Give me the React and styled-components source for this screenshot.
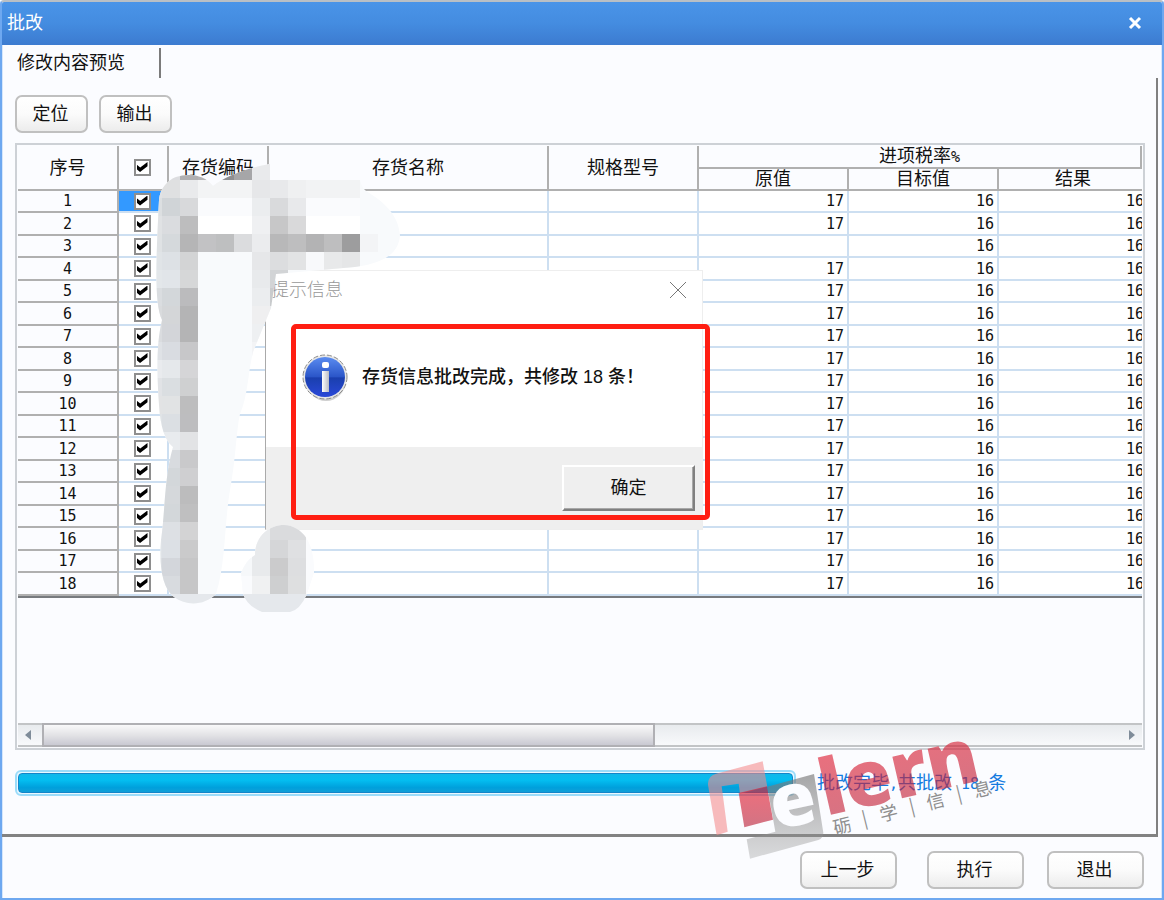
import { useState } from 'react';
import styled, { createGlobalStyle } from 'styled-components';

const GlobalStyle = createGlobalStyle`
  * {
    box-sizing: border-box;
  }
  body {
    margin: 0;
    background: #fbfcff;
    color: #111;
    font-family: 'Liberation Sans', 'Noto Sans CJK SC', sans-serif;
    font-size: 18px;
    line-height: 20px;
  }
  button {
    font: inherit;
    color: inherit;
    cursor: pointer;
  }
`;

const Window = styled.div`
  position: relative;
  display: flex;
  flex-direction: column;
  min-height: 100vh;
  border: 2px solid #6ea8f0;
  border-top-color: #b9bfc5;
  border-radius: 4px 4px 0 0;
  box-shadow: inset 1px 0 0 #d5e6fb, inset -1px 0 0 #d5e6fb;
  overflow: hidden;
`;
const TitleBar = styled.header`
  display: flex;
  justify-content: space-between;
  align-items: center;
  height: 43px;
  padding: 0 20px 2px 5px;
  background: linear-gradient(#4a94e8, #448ce0 50%, #3c7bd0);
  color: #fff;
`;
const Title = styled.h1`
  margin: 0;
  font-size: 18px;
  font-weight: 400;
`;
const IconButton = styled.button`
  display: flex;
  padding: 0;
  border: none;
  background: none;
`;
const TabBar = styled.nav`
  display: flex;
  height: 33px;
  padding: 3px 0 0 15px;
`;
const Tab = styled.button`
  width: 144px;
  height: 30px;
  padding: 0;
  border: none;
  border-right: 2px solid #7b7b7b;
  background: none;
  text-align: left;
`;
const Panel = styled.main`
  flex: 1;
  display: flex;
  flex-direction: column;
  margin-right: 4px;
  padding: 17px 11px 38px 13px;
  border-right: 2px solid #808080;
  border-bottom: 3px solid #828282;
`;
const Toolbar = styled.div`
  display: flex;
  gap: 11px;
  margin-bottom: 10px;
`;
const Button = styled.button`
  width: ${({ $wide }) => ($wide ? '97px' : '73px')};
  height: 38px;
  padding: 0 2px 0 0;
  border: 2px solid #c0c0c0;
  border-radius: 7px;
  background: linear-gradient(#fff, #fbfbfb 50%, #ececec);
`;
const GridFrame = styled.section`
  flex: 1;
  display: flex;
  flex-direction: column;
  justify-content: space-between;
  padding: 1px;
  border: 2px solid #cdd1d6;
`;
const GridView = styled.div`
  overflow: hidden;
`;
const Table = styled.table`
  width: calc(100% + 7px);
  table-layout: fixed;
  border-collapse: separate;
  border-spacing: 0;
  border-bottom: 2px solid #777a7e;
`;
const Col = styled.col`
  width: ${({ $width }) => $width};
`;
const HeadCell = styled.th`
  height: ${({ $half }) => ($half ? '22px' : '45px')};
  padding: 0;
  border-right: 2px solid #b0b0b0;
  border-bottom: 2px solid #b0b0b0;
  font-weight: 400;
  line-height: 20px;
`;
const GroupHead = styled(HeadCell)`
  height: 23px;
  padding-right: 7px;
  border-right: none;
`;
const GroupLabel = styled.div`
  border-right: 2px solid #b0b0b0;
`;
const Row = styled.tr`
  height: 22px;
  &:nth-child(even) {
    height: 23px;
  }
`;
const Cell = styled.td`
  padding: 0 3px 0 0;
  border-right: 2px solid #cddff1;
  border-bottom: 2px solid #cddff1;
  background: ${({ $selected }) => ($selected ? '#3399ff' : '#fff')};
  font-family: 'DejaVu Sans Mono', monospace;
  font-size: 15px;
  line-height: 20px;
  text-align: right;
`;
const IndexCell = styled(Cell)`
  padding: 0;
  border-color: #b0b0b0;
  background: #fbfcff;
  text-align: center;
`;
const CheckCell = styled(Cell)`
  padding: 0 2px 0 0;
  text-align: center;
`;
const CheckBox = styled.input`
  appearance: none;
  display: block;
  width: 17px;
  height: 17px;
  margin: 0 auto;
  padding: 1px;
  border: 2px solid #8e8e8e;
  background: #fff;
  &:checked::before {
    content: '';
    display: block;
    width: 11px;
    height: 10px;
    background: #000;
    clip-path: polygon(0 25%, 0 70%, 32% 100%, 100% 42%, 100% 0, 34% 54%);
  }
`;
const CheckHead = styled(HeadCell)`
  padding-right: 2px;
`;
const Latin = styled.span`
  font-family: 'DejaVu Sans Mono', monospace;
  font-size: 15px;
  white-space: pre;
`;
const ScrollBar = styled.div`
  display: flex;
  height: 24px;
  border: solid #c2c4c6;
  border-width: 2px 0;
  background: linear-gradient(#e8ebee, #f8f9fb);
`;
const ScrollArrow = styled.button`
  display: flex;
  align-items: center;
  justify-content: center;
  width: 24px;
  padding: ${({ $end }) => ($end ? '0 0 0 4px' : '0 4px 0 0')};
  border: none;
  background: none;
`;
const ScrollTrack = styled.div`
  flex: 1;
  margin: -2px 0;
`;
const ScrollThumb = styled.div`
  width: 57%;
  height: 24px;
  border: 2px solid #b0b0b4;
  background: linear-gradient(#f9f9fa, #e3e3e6 50%, #c9c9d2);
`;
const StatusRow = styled.div`
  display: flex;
  align-items: center;
  gap: 21px;
  margin-top: 20px;
`;
const Progress = styled.progress`
  appearance: none;
  flex: 1;
  height: 26px;
  padding: 1px;
  border: 2px solid #9bdcfa;
  border-radius: 6px;
  background: #eaf8ff;
  &::-webkit-progress-bar {
    background: #eaf8ff;
  }
  &::-webkit-progress-value {
    border: 1px solid #1585c8;
    border-radius: 4px;
    background: linear-gradient(#10b8ea, #04bdf0 35%, #00a0dc 75%, #109fd8);
  }
`;
const StatusText = styled.output`
  width: 328px;
  color: #147be0;
`;
const Footer = styled.footer`
  display: flex;
  justify-content: flex-end;
  gap: 23px;
  padding: 14px 18px 9px;
`;
const FirstButton = styled(Button)`
  margin-right: 7px;
`;
const Dialog = styled.div`
  position: absolute;
  top: 268px;
  left: 263px;
  width: 438px;
  border: 1px solid #eee;
  border-left-color: #aaa;
  background: #fff;
`;
const DialogHead = styled.div`
  display: flex;
  justify-content: space-between;
  align-items: center;
  height: 38px;
  padding: 0 16px 0 5px;
  color: #999;
`;
const DialogTitle = styled.h2`
  margin: 0;
  font-size: 18px;
  font-weight: 300;
`;
const DialogBody = styled.div`
  display: flex;
  gap: 14px;
  height: 138px;
  padding: 45px 0 0 36px;
`;
const Message = styled.p`
  margin: 13px 0 0;
  font-weight: 500;
`;
const DialogFoot = styled.div`
  display: flex;
  justify-content: flex-end;
  height: 82px;
  padding: 18px 7px 0 0;
  background: #efefef;
`;
const OkButton = styled.button`
  width: 133px;
  height: 46px;
  padding: 0;
  border: 2px solid;
  border-color: #fff #808080 #808080 #fff;
  background: #efefef;
  box-shadow: inset -1px -1px 0 #a8a8a8;
`;
const Highlight = styled.div`
  position: absolute;
  top: 322px;
  left: 289px;
  width: 419px;
  height: 196px;
  border: 5px solid #ff1e12;
  border-radius: 5px;
  pointer-events: none;
`;
const MosaicSvg = styled.svg`
  position: absolute;
  top: 158px;
  left: 148px;
  pointer-events: none;
`;
const WatermarkSvg = styled.svg`
  position: absolute;
  right: 142px;
  bottom: -2px;
  pointer-events: none;
`;

const rows = Array.from({ length: 18 }, (_, i) => ({
  id: i + 1,
  oldRate: i === 2 ? '' : 17,
  newRate: 16,
  result: 16,
}));

// cada coluna: [x, y inicial, tons de cima para baixo], blocos de 18px
const mosaicColumns = [
  [144, 162, '#e4e5e7 #e1e2e4 #dcdfe1 #e0e2e4 #dfe2e4 #e0e4e7 #e3e7ea #dadde0 #d9dbdd #dadcdf #dfe2e6 #e9ebee #e1e3e6 #e2e3e4 #dfe3e6 #ebedf0 #dbdee2 #d9dcdf #dadde0 #d9dcdf #dfe2e6 #dfe3e7 #dadde1 #dde0e4 #e5e8ec'],
  [162, 162, '#dcdde0 #dfe0e1 #d0d4d7 #dadcdf #d5d9dc #dde1e5 #e1e5e9 #d3d7da #d4d6d8 #d3d5d9 #d9dce1 #e5e8eb #dadee1 #e1e3e4 #dbdfe3 #e8ebee #d8dbdf #d3d7da #d5d8db #d3d7da #dde0e4 #dce0e5 #d3d6db #d8dbdf #e5e8ec'],
  [180, 162, '#b0b0b2 #e9eaec #d8d9db #bdbdbe #b5b5b6 #d3d4d5 #d6d7d8 #bbbbbd #b4b4b5 #b4b4b5 #c7c7c9 #d5d5d7 #cfd0d1 #bdbdbe #bdbdbf #e2e3e5 #c9c9cb #cfcfd1 #bcbcbd #bfbfc0 #d3d3d4 #cacacb #c6c6c7 #c6c6c7 #e5e8ec'],
  [198, 162, '#b4b4b6 #f3f4f5 #fafbfd #fff #c2c2c4'],
  [216, 162, '#8e8e90 #f3f4f5 #fafbfd #fff #bebfc0'],
  [234, 162, '#a6a6a8 #f3f4f5 #fafbfd #fff #dbdcde'],
  [252, 162, '#e9eaec #e6e7e9 #ebedef #eff0f2 #ebecee #e6e7e9 #e8eaec #ebedef #efeff0 #eef0f2 #f3f4f6'],
  [270, 180, '#e8e9eb #d9dadc #c7c7c8 #b8b8b9 #dcdddf #d2d4d6 #c9cbcd #e9eaec'],
  [288, 180, '#eff0f1 #e8e9eb #d9d9da #bebebf #e2e3e4'],
  [306, 180, '#f2f3f4 #fafbfd #fff #b3b3b4 #f8f9fb'],
  [324, 180, '#f2f3f4 #fafbfd #fff #bebebf #e8e9ea'],
  [342, 180, '#f2f3f4 #fafbfd #fff #9d9d9e #e5e6e7'],
  [360, 234, '#f3f4f6'],
  [198, 594, '#e5e8ec'],
  [216, 594, '#e5e8ec'],
];
const smallColumns = [
  [234, 558, '#f6f8fa #fafbfd #e5e8ec'],
  [252, 522, '#e8eaec #e8eaec #e8eaec #f0f1f2 #e5e8ec'],
  [270, 522, '#dadbdd #d5d6d8 #cbcbcc #cecfd0 #e5e8ec'],
  [288, 522, '#dadbdd #dfe0e2 #dddee0 #dedfe0 #e5e8ec'],
  [306, 594, '#e5e8ec'],
];

const Blocks = ({ columns }) =>
  columns.map(([x, y, tones]) =>
    tones
      .split(' ')
      .map((tone, i) => (
        <rect key={`${x}-${y}-${i}`} x={x} y={y + i * 18} width='18' height='18' fill={tone} />
      ))
  );

const Mosaic = () => (
  <MosaicSvg width='260' height='460' viewBox='150 160 260 460' shapeRendering='crispEdges' aria-hidden='true'>
    <defs>
      <clipPath id='smearBig'>
        <path d='M159 200C160 188 168 180 176 177C188 173 204 174 213 186C224 177 246 168 270 164V180H360Q362 188 366 191C384 202 398 214 400 235C399 252 386 263 355 267L276 274L271 308L253 352C248 372 248 396 240 414C236 432 236 458 230 490C224 526 226 562 216 594C204 606 186 606 174 597C162 588 159 566 161 540C165 514 164 478 173 447Q161 438 159 405C157 376 156 344 162 320C154 304 156 260 159 200Z' />
      </clipPath>
      <clipPath id='smearSmall'>
        <path d='M241 573Q246 560 255 555C255 535 270 525 284 525C304 526 315 545 314 573L307 594Q300 610 290 612H262Q247 606 243 594Z' />
      </clipPath>
    </defs>
    <g clipPath='url(#smearBig)'>
      <rect x='150' y='160' width='260' height='460' fill='#f8fafc' />
      <Blocks columns={mosaicColumns} />
    </g>
    <g clipPath='url(#smearSmall)'>
      <rect x='234' y='520' width='90' height='100' fill='#fafbfd' />
      <Blocks columns={smallColumns} />
    </g>
  </MosaicSvg>
);

const InfoIcon = () => (
  <svg width='46' height='48' viewBox='0 0 46 48' aria-hidden='true'>
    <defs>
      <linearGradient id='infoBall' x1='0' y1='0' x2='0' y2='1'>
        <stop offset='0' stopColor='#5b8cf0' />
        <stop offset='0.5' stopColor='#2a55c8' />
        <stop offset='0.52' stopColor='#1a3fae' />
        <stop offset='1' stopColor='#2a48d8' />
      </linearGradient>
      <linearGradient id='infoStem' x1='0' y1='0' x2='1' y2='0'>
        <stop offset='0' stopColor='#fff' />
        <stop offset='1' stopColor='#b9bcc4' />
      </linearGradient>
    </defs>
    <ellipse cx='24' cy='26' rx='20' ry='21' fill='#bbb' opacity='0.7' />
    <circle cx='23' cy='23' r='22' fill='#e6e6e6' />
    <circle cx='23' cy='23' r='22' fill='none' stroke='#8c8c8c' strokeWidth='1' strokeDasharray='5 2' />
    <circle cx='23' cy='23' r='20' fill='url(#infoBall)' />
    <rect x='20' y='8' width='7' height='6' rx='2' fill='#fff' />
    <rect x='20' y='17' width='7' height='21' fill='url(#infoStem)' />
  </svg>
);

const Watermark = () => (
  <WatermarkSvg width='330' height='180' viewBox='0 0 990 540' aria-hidden='true'>
    <defs>
      <linearGradient id='markRed' x1='0' y1='0' x2='0' y2='1'>
        <stop offset='0' stopColor='#e8182c' stopOpacity='0.62' />
        <stop offset='1' stopColor='#b82038' stopOpacity='0.62' />
      </linearGradient>
      <linearGradient id='markGrey' x1='0' y1='0' x2='0' y2='1'>
        <stop offset='0' stopColor='#777' stopOpacity='0.65' />
        <stop offset='1' stopColor='#999' stopOpacity='0.35' />
      </linearGradient>
    </defs>
    <path d='M80 346L54 195Q52 168 78 161L218 124L232 200L150 221L146 191L95 199L113 335Z' fill='#f58a8c' fillOpacity='0.58' />
    <path d='M146 219L231 199L249 299L163 322Z' fill='url(#markRed)' />
    <path d='M232 200L372 162L400 338Q400 355 385 360L180 416L170 358L256 335Z' fill='url(#markGrey)' />
    <g fontFamily='Open Sans'>
      <text transform='translate(256 330) rotate(-12)' fontSize='222' fontWeight='800' fill='#fbfcff'>
        e
      </text>
      <text transform='translate(408 288) rotate(-13)' fontSize='232' fontWeight='800' fill='url(#markRed)'>
        lern
      </text>
    </g>
    <g fontFamily='Noto Sans CJK SC' fontSize='54' fill='#8e8e8e' textAnchor='middle'>
      {[
        ['砺', 461, 337],
        ['|', 528, 314],
        ['学', 601, 299],
        ['|', 670, 277],
        ['信', 741, 263],
        ['|', 811, 239],
        ['息', 883, 227],
      ].map(([char, x, y]) => (
        <text key={x} transform={`translate(${x} ${y}) rotate(-14)`}>
          {char}
        </text>
      ))}
    </g>
  </WatermarkSvg>
);

const App = () => {
  const [checked, setChecked] = useState(rows.map(() => true));
  const [dialogOpen, setDialogOpen] = useState(true);
  const allChecked = checked.every(Boolean);

  const toggleRow = (index) => {
    setChecked(checked.map((value, i) => (i === index ? !value : value)));
  };

  return (
    <>
      <GlobalStyle />
      <Window>
        <TitleBar>
          <Title>批改</Title>
          <IconButton aria-label='关闭'>
            <svg width='14' height='14' viewBox='0 0 14 14'>
              <path d='M2 2L12 12M12 2L2 12' stroke='#fff' strokeWidth='3' />
            </svg>
          </IconButton>
        </TitleBar>
        <TabBar>
          <Tab>修改内容预览</Tab>
        </TabBar>
        <Panel>
          <Toolbar>
            <Button>定位</Button>
            <Button>输出</Button>
          </Toolbar>
          <GridFrame>
            <GridView>
              <Table>
                <colgroup>
                  <Col $width='101px' />
                  <Col $width='50px' />
                  <Col $width='100px' />
                  <Col $width='auto' />
                  <Col $width='150px' />
                  <Col $width='150px' />
                  <Col $width='150px' />
                  <Col $width='150px' />
                </colgroup>
                <thead>
                  <tr>
                    <HeadCell rowSpan={2}>序号</HeadCell>
                    <CheckHead rowSpan={2}>
                      <CheckBox
                        type='checkbox'
                        aria-label='全选'
                        checked={allChecked}
                        onChange={() => setChecked(rows.map(() => !allChecked))}
                      />
                    </CheckHead>
                    <HeadCell rowSpan={2}>存货编码</HeadCell>
                    <HeadCell rowSpan={2}>存货名称</HeadCell>
                    <HeadCell rowSpan={2}>规格型号</HeadCell>
                    <GroupHead colSpan={3}>
                      <GroupLabel>
                        进项税率<Latin>%</Latin>
                      </GroupLabel>
                    </GroupHead>
                  </tr>
                  <tr>
                    <HeadCell $half>原值</HeadCell>
                    <HeadCell $half>目标值</HeadCell>
                    <HeadCell $half>结果</HeadCell>
                  </tr>
                </thead>
                <tbody>
                  {rows.map((row, index) => (
                    <Row key={row.id}>
                      <IndexCell>{row.id}</IndexCell>
                      <CheckCell $selected={index === 0}>
                        <CheckBox
                          type='checkbox'
                          aria-label={`选择第 ${row.id} 行`}
                          checked={checked[index]}
                          onChange={() => toggleRow(index)}
                        />
                      </CheckCell>
                      <Cell />
                      <Cell />
                      <Cell />
                      <Cell>{row.oldRate}</Cell>
                      <Cell>{row.newRate}</Cell>
                      <Cell>{row.result}</Cell>
                    </Row>
                  ))}
                </tbody>
              </Table>
            </GridView>
            <ScrollBar>
              <ScrollArrow aria-label='向左滚动'>
                <svg width='6' height='10' viewBox='0 0 6 10'>
                  <path d='M6 0V10L0 5Z' fill='#7f8c99' />
                </svg>
              </ScrollArrow>
              <ScrollTrack>
                <ScrollThumb />
              </ScrollTrack>
              <ScrollArrow $end aria-label='向右滚动'>
                <svg width='6' height='10' viewBox='0 0 6 10'>
                  <path d='M0 0V10L6 5Z' fill='#7f8c99' />
                </svg>
              </ScrollArrow>
            </ScrollBar>
          </GridFrame>
          <StatusRow>
            <Progress value={18} max={18} aria-label='批改进度' />
            <StatusText>
              批改完毕<Latin>,</Latin>共批改<Latin> 18 </Latin>条
            </StatusText>
          </StatusRow>
        </Panel>
        <Footer>
          <FirstButton $wide>上一步</FirstButton>
          <Button $wide>执行</Button>
          <Button $wide>退出</Button>
        </Footer>

        {dialogOpen && (
          <>
            <Dialog role='dialog' aria-labelledby='dialog-title'>
              <DialogHead>
                <DialogTitle id='dialog-title'>提示信息</DialogTitle>
                <IconButton aria-label='关闭提示' onClick={() => setDialogOpen(false)}>
                  <svg width='16' height='16' viewBox='0 0 16 16'>
                    <path d='M0 0L16 16M16 0L0 16' stroke='#777' strokeWidth='1' />
                  </svg>
                </IconButton>
              </DialogHead>
              <DialogBody>
                <InfoIcon />
                <Message>存货信息批改完成，共修改 18 条！</Message>
              </DialogBody>
              <DialogFoot>
                <OkButton onClick={() => setDialogOpen(false)}>确定</OkButton>
              </DialogFoot>
            </Dialog>
            <Highlight />
          </>
        )}
        <Mosaic />
        <Watermark />
      </Window>
    </>
  );
};

export default App;
